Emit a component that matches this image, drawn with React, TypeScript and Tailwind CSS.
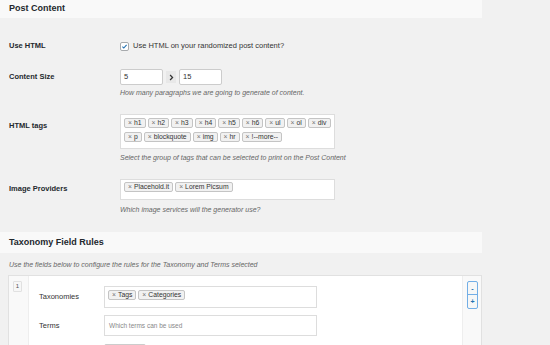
import React from 'react';

const Chip = ({ label }: { label: string }) => (
  <span className="inline-flex h-[10px] items-center rounded-[2px] border border-[#c4c4c4] bg-[#f1f1f1] px-[3px] text-[6.8px] leading-none whitespace-nowrap text-[#333]">
    <span className="mr-[2px] text-[#777]">×</span>
    {label}
  </span>
);

const Help = ({ children }: { children: React.ReactNode }) => (
  <p className="h-[9px] text-[7px] leading-[9px] italic text-[#666]">{children}</p>
);

export default function App() {
  const tagRows = [
    ['h1', 'h2', 'h3', 'h4', 'h5', 'h6', 'ul', 'ol', 'div'],
    ['p', 'blockquote', 'img', 'hr', '!--more--'],
  ];

  return (
    <div
      className="h-[345px] w-[550px] overflow-hidden bg-[#f1f1f1] text-[#23282d]"
      style={{ fontFamily: '"Liberation Sans", Arial, sans-serif' }}
    >
      <div className="w-[482px]">
        {/* Post Content header */}
        <div className="flex h-[18px] items-center bg-[#f9f9f9] pl-[9px] text-[9px] font-bold">Post Content</div>

        {/* Use HTML */}
        <div className="mt-[23px] flex h-[10px] items-center">
          <div className="w-[120px] pl-[9px] text-[7.5px] font-bold">Use HTML</div>
          <span className="flex h-[9px] w-[9px] items-center justify-center rounded-[2px] border border-[#a7aaad] bg-white">
            <svg viewBox="0 0 10 10" className="h-[7px] w-[7px]">
              <path d="M2 5.2l2 2L8 2.8" fill="none" stroke="#2271b1" strokeWidth="1.6" />
            </svg>
          </span>
          <span className="ml-[4px] text-[7.5px] text-[#333]">Use HTML on your randomized post content?</span>
        </div>

        {/* Content Size */}
        <div className="mt-[18px] flex h-[16px] items-center">
          <div className="w-[120px] pl-[9px] text-[7.5px] font-bold">Content Size</div>
          <div className="flex h-[16px] w-[43px] items-center rounded-[2px] border border-[#ccc] bg-white pl-[3px] text-[7.5px] text-[#333]">5</div>
          <div className="mx-[3px] flex h-[12px] w-[10px] items-center justify-center bg-[#e8e8e8]">
            <svg viewBox="0 0 10 10" className="h-[7px] w-[7px]">
              <path d="M3 1.5l3.5 3.5L3 8.5" fill="none" stroke="#333" strokeWidth="1.8" />
            </svg>
          </div>
          <div className="flex h-[16px] w-[43px] items-center rounded-[2px] border border-[#ccc] bg-white pl-[3px] text-[7.5px] text-[#333]">15</div>
        </div>
        <div className="mt-[3px] pl-[120px]">
          <Help>How many paragraphs we are going to generate of content.</Help>
        </div>

        {/* HTML tags */}
        <div className="mt-[17px] flex">
          <div className="w-[120px] pt-[6px] pl-[9px] text-[7.5px] font-bold">HTML tags</div>
          <div className="flex h-[35px] w-[215px] flex-col gap-[4px] border border-[#ddd] bg-white px-[3px] pt-[3px]">
            {tagRows.map((row, i) => (
              <div key={i} className="flex gap-[2px]">
                {row.map((t) => (
                  <Chip key={t} label={t} />
                ))}
              </div>
            ))}
          </div>
        </div>
        <div className="mt-[4px] pl-[120px]">
          <Help>Select the group of tags that can be selected to print on the Post Content</Help>
        </div>

        {/* Image Providers */}
        <div className="mt-[17px] flex">
          <div className="w-[120px] pt-[4px] pl-[9px] text-[7.5px] font-bold">Image Providers</div>
          <div className="flex h-[21px] w-[215px] gap-[2px] border border-[#ddd] bg-white px-[3px] pt-[2px]">
            <Chip label="Placehold.it" />
            <Chip label="Lorem Picsum" />
          </div>
        </div>
        <div className="mt-[5px] pl-[120px]">
          <Help>Which image services will the generator use?</Help>
        </div>

        {/* Taxonomy header */}
        <div className="mt-[18px] flex h-[21px] items-center bg-[#f9f9f9] pl-[9px] text-[9px] font-bold">Taxonomy Field Rules</div>
        <div className="mt-[7px] pl-[9px]">
          <Help>Use the fields below to configure the rules for the Taxonomy and Terms selected</Help>
        </div>

        {/* Repeater */}
        <div className="mt-[6px] ml-[8px] flex h-[80px] border border-[#e1e1e1]">
          <div className="w-[19px] bg-[#f9f9f9] pt-[5px] pl-[4px]">
            <div className="flex h-[11px] w-[9px] items-center justify-center rounded-[1px] border border-[#e1e1e1] bg-[#f7f7f7] text-[6px] text-[#555]">1</div>
          </div>
          <div className="flex-1 border-l border-[#eee] bg-white pt-[10px]">
            <div className="flex h-[22px] items-center">
              <div className="w-[75px] pl-[10px] text-[7.5px] text-[#333]">Taxonomies</div>
              <div className="flex h-[22px] w-[213px] gap-[2px] border border-[#ddd] bg-white px-[3px] pt-[3px]">
                <Chip label="Tags" />
                <Chip label="Categories" />
              </div>
            </div>
            <div className="mt-[7px] flex h-[21px] items-center">
              <div className="w-[75px] pl-[10px] text-[7.5px] text-[#333]">Terms</div>
              <div className="flex h-[21px] w-[213px] items-center border border-[#ddd] bg-white pl-[4px] text-[6.5px] text-[#888]">Which terms can be used</div>
            </div>
            <div className="mt-[8px] ml-[75px] h-[10px] w-[42px] rounded-[2px] border border-[#ccc] bg-[#f7f7f7]" />
          </div>
          <div className="w-[19px] border-l border-[#eee] bg-[#f9f9f9] pt-[5px] pl-[4px]">
            <div className="flex w-[11px] flex-col overflow-hidden rounded-[2px] border border-[#72aee6] bg-[#f6f7f7]">
              <div className="flex h-[13px] items-center justify-center border-b border-[#72aee6] text-[7px] font-bold leading-none text-[#2271b1]">-</div>
              <div className="flex h-[13px] items-center justify-center text-[7px] font-bold leading-none text-[#2271b1]">+</div>
            </div>
          </div>
        </div>
      </div>
    </div>
  );
}
